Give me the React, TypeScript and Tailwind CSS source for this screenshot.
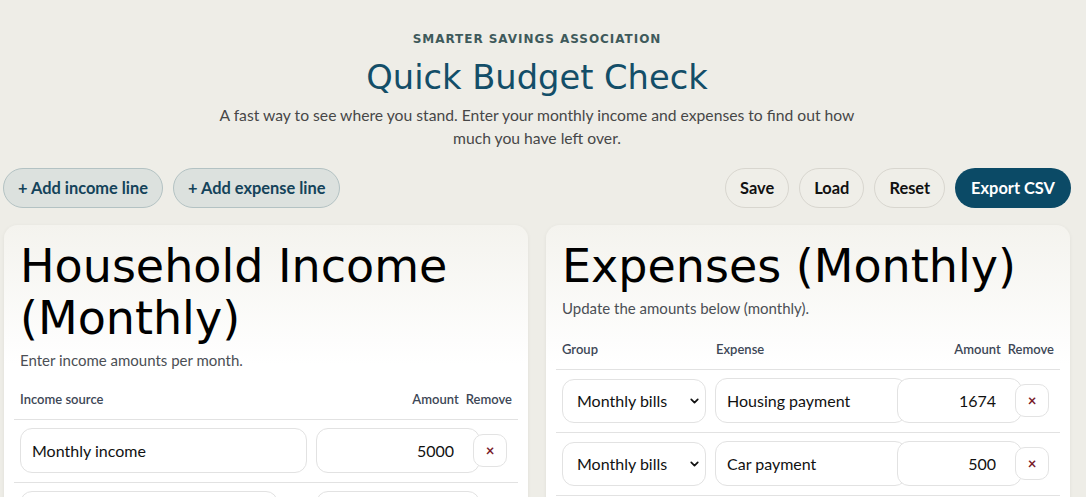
import React from 'react';
import { ChevronDown } from 'lucide-react';

const heading = { fontFamily: '"DejaVu Sans", "Noto Sans", sans-serif' };

type IncomeRow = { name: string; amount: string; nameW: string };
type ExpenseRow = { group: string; name: string; amount: string };

const incomeRows: IncomeRow[] = [
  { name: 'Monthly income', amount: '5000', nameW: 'w-[287px]' },
  { name: 'Other income', amount: '0', nameW: 'w-[258px]' },
];

const expenseRows: ExpenseRow[] = [
  { group: 'Monthly bills', name: 'Housing payment', amount: '1674' },
  { group: 'Monthly bills', name: 'Car payment', amount: '500' },
  { group: 'Monthly bills', name: 'Utilities', amount: '250' },
];

const RemoveButton: React.FC = () => (
  <button className="relative z-10 flex h-[33px] w-[34px] shrink-0 items-center justify-center rounded-[10px] border border-[#e3e3e3] bg-white text-[15px] font-bold text-[#7a1b2b]">
    ×
  </button>
);

const App: React.FC = () => {
  return (
    <div className="min-h-screen bg-[#eeede7] font-['Lato',sans-serif] text-[#1a1a1a]">
      <div className="pl-[3px] pr-[15px] pt-[31px]">
        <header className="flex flex-col items-center text-center">
          <p className="text-[12px] font-semibold leading-4 tracking-[0.08em] text-[#3e5a5b]" style={heading}>
            SMARTER SAVINGS ASSOCIATION
          </p>
          <h1 className="mt-[13px] text-[33.7px] leading-9 text-[#134e68]" style={heading}>
            Quick Budget Check
          </h1>
          <p className="mt-[8px] max-w-[645px] text-[15.7px] leading-[23px] text-[#474747]">
            A fast way to see where you stand. Enter your monthly income and expenses to find out how much you have
            left over.
          </p>
        </header>

        <div className="mt-[18px] flex items-center justify-between">
          <div className="flex gap-[10px]">
            <button className="h-10 rounded-full border border-[#b3c2c3] bg-[#dce1de] px-[14px] text-[16.4px] font-bold text-[#14435a]">
              + Add income line
            </button>
            <button className="h-10 rounded-full border border-[#b3c2c3] bg-[#dce1de] px-[14px] text-[16.4px] font-bold text-[#14435a]">
              + Add expense line
            </button>
          </div>
          <div className="flex gap-[10px]">
            <button className="h-10 rounded-full border border-[#d8d6cf] bg-[#efeee8] px-[14px] text-[16.4px] font-bold text-[#111]">
              Save
            </button>
            <button className="h-10 rounded-full border border-[#d8d6cf] bg-[#efeee8] px-[14px] text-[16.4px] font-bold text-[#111]">
              Load
            </button>
            <button className="h-10 rounded-full border border-[#d8d6cf] bg-[#efeee8] px-[14px] text-[16.4px] font-bold text-[#111]">
              Reset
            </button>
            <button className="h-10 rounded-full bg-[#0b4a66] px-[16px] text-[16.4px] font-bold text-white">
              Export CSV
            </button>
          </div>
        </div>

        <div className="mt-[17px] flex gap-[18px] pl-px pr-px">
          <section className="flex-1 rounded-[14px] bg-gradient-to-b from-[#f4f3ee] to-white to-[140px] px-[10px] pt-[15px] shadow-[0_1px_4px_rgba(0,0,0,0.06)]">
            <h2 className="px-[6px] text-[46px] leading-[52px] text-black" style={heading}>
              Household Income (Monthly)
            </h2>
            <p className="mt-[6px] px-[6px] text-[15px] leading-5 text-[#4b4f55]">Enter income amounts per month.</p>
            <div className="mt-[20px] flex items-center border-b border-[#e2e2e2] px-[6px] pb-[9px] text-[13px] font-semibold text-[#3d4756]">
              <span className="flex-1">Income source</span>
              <span>Amount</span>
              <span className="ml-[7px]">Remove</span>
            </div>
            {incomeRows.map((r) => (
              <div key={r.name} className="flex h-[63px] items-center border-b border-[#e2e2e2] px-[6px]">
                <div className="w-[296px] shrink-0">
                  <input
                    defaultValue={r.name}
                    className={`${r.nameW} h-[45px] rounded-[12px] border border-[#e2e2e2] bg-white px-[11px] text-[16px] text-[#111] outline-none`}
                  />
                </div>
                <input
                  defaultValue={r.amount}
                  className="h-[45px] w-[164px] shrink-0 rounded-[12px] border border-[#e2e2e2] bg-white pr-[25px] text-right text-[16px] text-[#111] outline-none"
                />
                <div className="-ml-[7px]">
                  <RemoveButton />
                </div>
              </div>
            ))}
          </section>

          <section className="flex-1 rounded-[14px] bg-gradient-to-b from-[#f4f3ee] to-white to-[140px] px-[10px] pt-[15px] shadow-[0_1px_4px_rgba(0,0,0,0.06)]">
            <h2 className="px-[6px] text-[46px] leading-[52px] text-black" style={heading}>
              Expenses (Monthly)
            </h2>
            <p className="mt-[6px] px-[6px] text-[15px] leading-5 text-[#4b4f55]">
              Update the amounts below (monthly).
            </p>
            <div className="mt-[22px] flex items-center border-b border-[#e2e2e2] px-[6px] pb-[9px] text-[13px] font-semibold text-[#3d4756]">
              <span className="w-[154px]">Group</span>
              <span className="flex-1">Expense</span>
              <span>Amount</span>
              <span className="ml-[7px]">Remove</span>
            </div>
            {expenseRows.map((r) => (
              <div key={r.name} className="flex h-[63px] items-center border-b border-[#e2e2e2] px-[6px]">
                <div className="relative h-[44px] w-[144px] shrink-0">
                  <select
                    defaultValue={r.group}
                    className="h-full w-full appearance-none rounded-[12px] border border-[#e2e2e2] bg-white pl-[14px] text-[16px] text-[#111] outline-none"
                  >
                    <option>Monthly bills</option>
                    <option>Everyday spending</option>
                    <option>Savings</option>
                  </select>
                  <ChevronDown
                    size={13}
                    strokeWidth={3.2}
                    className="pointer-events-none absolute right-[5px] top-1/2 -translate-y-1/2 text-[#111]"
                  />
                </div>
                <input
                  defaultValue={r.name}
                  className="ml-[9px] h-[45px] w-[192px] shrink-0 rounded-[12px] border border-[#e2e2e2] bg-white px-[11px] text-[16px] text-[#111] outline-none"
                />
                <input
                  defaultValue={r.amount}
                  className="relative -ml-[10px] h-[45px] w-[125px] shrink-0 rounded-[12px] border border-[#e2e2e2] bg-white pr-[25px] text-right text-[16px] text-[#111] outline-none"
                />
                <div className="-ml-[7px]">
                  <RemoveButton />
                </div>
              </div>
            ))}
          </section>
        </div>
      </div>
    </div>
  );
};

export default App;
